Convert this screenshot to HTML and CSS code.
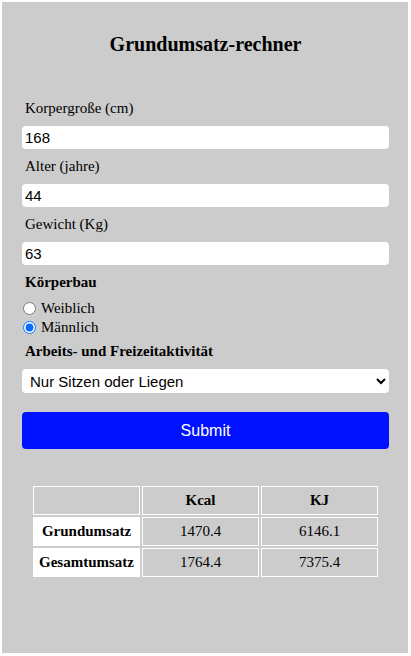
FILE: index.html
```html
<!DOCTYPE html>
<html lang="de">
<head>
<meta charset="utf-8">
<title>Grundumsatz-rechner</title>
<link rel="stylesheet" href="styles.css">
</head>
<body>
<div class="app">
  <h2 class="title">Grundumsatz-rechner</h2>
  <form class="form">
    <label class="label">Korpergroße (cm)</label>
    <input class="field" type="text" value="168">
    <label class="label">Alter (jahre)</label>
    <input class="field" type="text" value="44">
    <label class="label">Gewicht (Kg)</label>
    <input class="field" type="text" value="63">
    <div class="label bold">Körperbau</div>
    <label class="radio-row"><input type="radio" name="sex" class="radio"> Weiblich</label>
    <label class="radio-row"><input type="radio" name="sex" class="radio" checked> Männlich</label>
    <div class="label bold activity">Arbeits- und Freizeitaktivität</div>
    <select class="select">
      <option>Nur Sitzen oder Liegen</option>
    </select>
    <button type="button" class="submit">Submit</button>
  </form>
  <table class="results">
    <tr>
      <th class="blank"></th>
      <th>Kcal</th>
      <th>KJ</th>
    </tr>
    <tr>
      <th class="rowhead">Grundumsatz</th>
      <td>1470.4</td>
      <td>6146.1</td>
    </tr>
    <tr>
      <th class="rowhead">Gesamtumsatz</th>
      <td>1764.4</td>
      <td>7375.4</td>
    </tr>
  </table>
</div>
</body>
</html>
```

FILE: styles.css
```css
html, body {
  margin: 0;
  padding: 0;
  background: #ffffff;
}
body {
  padding: 2px;
  font-family: "Liberation Serif", "Times New Roman", serif;
  color: #000;
}
.app {
  background: #cccccc;
  height: 651px;
  width: 406px;
  box-sizing: border-box;
  padding: 31px 19px 0 20px;
}
.title {
  margin: 0;
  text-align: center;
  font-size: 20px;
  line-height: 22px;
  font-weight: bold;
}
.form {
  display: flex;
  flex-direction: column;
  margin-top: 45px;
}
.label {
  font-size: 15px;
  line-height: 17px;
  padding-left: 3px;
  margin: 0 0 9px;
}
.label.bold {
  font-weight: bold;
  margin-bottom: 8px;
}
.field {
  height: 23px;
  box-sizing: border-box;
  border: none;
  border-radius: 4px;
  background: #fff;
  padding: 0 3px;
  font-family: "Liberation Sans", Arial, sans-serif;
  font-size: 15px;
  margin: 0 0 9px;
  outline: none;
}
.radio-row {
  display: flex;
  align-items: center;
  gap: 5px;
  font-size: 15px;
  line-height: 19px;
  height: 19px;
}
.radio {
  margin: 0 0 0 1px;
  width: 13px;
  height: 13px;
  accent-color: #0a6cff;
}
.label.bold.activity {
  margin-top: 6px;
  margin-bottom: 9px;
}
.select {
  height: 24px;
  box-sizing: border-box;
  border: none;
  border-radius: 4px;
  background: #fff;
  font-family: "Liberation Sans", Arial, sans-serif;
  font-size: 15px;
  padding: 0 4px;
  color: #000;
}
.submit {
  margin-top: 19px;
  height: 37px;
  border: none;
  border-radius: 4px;
  background: #0011ff;
  color: #fff;
  font-family: "Liberation Sans", Arial, sans-serif;
  font-size: 16px;
}
.results {
  margin: 35px 0 0 9px;
  border-spacing: 2px;
  border-collapse: separate;
  font-size: 15px;
}
.results th, .results td {
  border: 1px solid #ffffff;
  height: 29px;
  padding: 0;
  text-align: center;
  box-sizing: border-box;
}
.results th {
  font-weight: bold;
}
.results .blank {
  width: 107px;
}
.results tr > :nth-child(2), .results tr > :nth-child(3) {
  width: 117px;
}
.results .rowhead {
  background: #ffffff;
}
```
